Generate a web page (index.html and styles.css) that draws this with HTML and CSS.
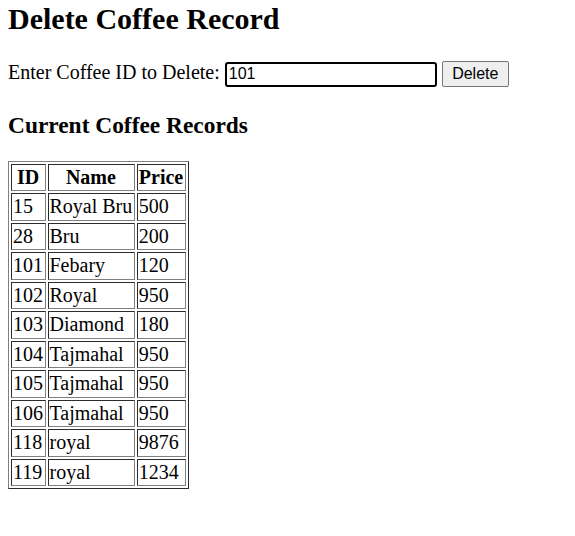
FILE: index.html
```html
<!DOCTYPE html>
<html>
<head>
<meta charset="utf-8">
<title>Delete Coffee Record</title>
<link rel="stylesheet" href="styles.css">
</head>
<body>
<h1 class="title">Delete Coffee Record</h1>
<form class="form">
<label class="label">Enter Coffee ID to Delete:</label> <input class="field" type="text" value="101"> <button class="btn" type="button">Delete</button>
</form>
<h3 class="sub">Current Coffee Records</h3>
<table class="records">
<tr><th>ID</th><th>Name</th><th>Price</th></tr>
<tr><td>15</td><td>Royal Bru</td><td>500</td></tr>
<tr><td>28</td><td>Bru</td><td>200</td></tr>
<tr><td>101</td><td>Febary</td><td>120</td></tr>
<tr><td>102</td><td>Royal</td><td>950</td></tr>
<tr><td>103</td><td>Diamond</td><td>180</td></tr>
<tr><td>104</td><td>Tajmahal</td><td>950</td></tr>
<tr><td>105</td><td>Tajmahal</td><td>950</td></tr>
<tr><td>106</td><td>Tajmahal</td><td>950</td></tr>
<tr><td>118</td><td>royal</td><td>9876</td></tr>
<tr><td>119</td><td>royal</td><td>1234</td></tr>
</table>
</body>
</html>
```
FILE: styles.css
```css
body {
  margin: 2px 8px 8px;
  font-family: "Liberation Serif", serif;
  font-size: 20px;
  color: #000;
  background: #fff;
}
.title {
  font-size: 30px;
  margin: 0 0 25px;
}
.form {
  margin: 0;
}
.field {
  box-sizing: border-box;
  width: 212px;
  height: 25px;
  font-family: "Liberation Sans", sans-serif;
  font-size: 16px;
  padding: 1px 2px;
  border: 2px solid #000;
  border-radius: 3px;
  outline: none;
}
.btn {
  box-sizing: border-box;
  width: 67px;
  height: 26px;
  font-family: "Liberation Sans", sans-serif;
  font-size: 16px;
  color: #000;
  padding: 0 6px;
  background: #efefef;
  border: 1px solid #767676;
  border-radius: 2px;
}
.sub {
  font-size: 23.4px;
  margin: 25px 0 22px;
}
.records {
  border: 1px outset #808080;
  border-spacing: 2px;
}
.records th,
.records td {
  border: 1px inset #808080;
  padding: 1px 1.5px 1px 1px;
  line-height: 23.45px;
}
```
